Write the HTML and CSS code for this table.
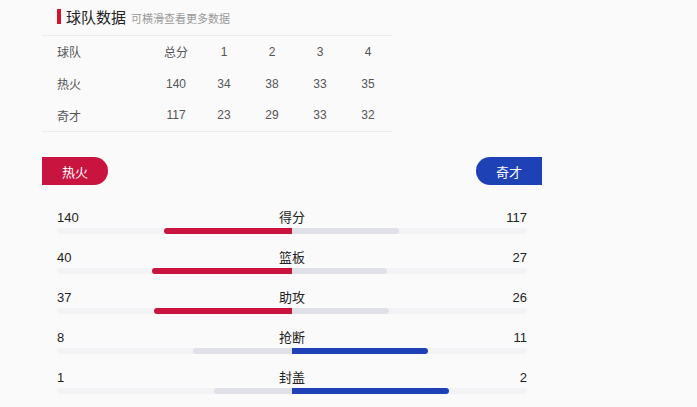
FILE: index.html
```html
<!DOCTYPE html>
<html lang="zh">
<head>
<meta charset="utf-8">
<link rel="stylesheet" href="styles.css">
</head>
<body>
<div class="page">
  <div class="title">
    <span class="mark"></span>
    <span class="title-main">球队数据</span>
    <span class="title-sub">可横滑查看更多数据</span>
  </div>
  <table class="score">
    <tr><td class="team">球队</td><td>总分</td><td>1</td><td>2</td><td>3</td><td>4</td></tr>
    <tr><td class="team">热火</td><td>140</td><td>34</td><td>38</td><td>33</td><td>35</td></tr>
    <tr><td class="team">奇才</td><td>117</td><td>23</td><td>29</td><td>33</td><td>32</td></tr>
  </table>
  <div class="teams">
    <span class="pill home">热火</span>
    <span class="pill away">奇才</span>
  </div>
  <div class="stats">
    <div class="stat">
      <div class="line"><span>140</span><span class="label">得分</span><span>117</span></div>
      <div class="track"><div class="half left"><div class="bar red" style="width:54.47%"></div></div><div class="half right"><div class="bar gray" style="width:45.53%"></div></div></div>
    </div>
    <div class="stat">
      <div class="line"><span>40</span><span class="label">篮板</span><span>27</span></div>
      <div class="track"><div class="half left"><div class="bar red" style="width:59.70%"></div></div><div class="half right"><div class="bar gray" style="width:40.30%"></div></div></div>
    </div>
    <div class="stat">
      <div class="line"><span>37</span><span class="label">助攻</span><span>26</span></div>
      <div class="track"><div class="half left"><div class="bar red" style="width:58.73%"></div></div><div class="half right"><div class="bar gray" style="width:41.27%"></div></div></div>
    </div>
    <div class="stat">
      <div class="line"><span>8</span><span class="label">抢断</span><span>11</span></div>
      <div class="track"><div class="half left"><div class="bar gray" style="width:42.11%"></div></div><div class="half right"><div class="bar blue" style="width:57.89%"></div></div></div>
    </div>
    <div class="stat">
      <div class="line"><span>1</span><span class="label">封盖</span><span>2</span></div>
      <div class="track"><div class="half left"><div class="bar gray" style="width:33.33%"></div></div><div class="half right"><div class="bar blue" style="width:66.67%"></div></div></div>
    </div>
  </div>
</div>
</body>
</html>
```
FILE: styles.css
```css
* { box-sizing: border-box; }
html, body {
  margin: 0;
  padding: 0;
  background: #fafafb;
  font-family: "Liberation Sans", "Noto Sans CJK SC", sans-serif;
  color: #222;
}
.page {
  width: 697px;
  height: 407px;
  overflow: hidden;
  padding-left: 42px;
}
.title {
  display: flex;
  align-items: center;
  height: 35px;
  padding-left: 15px;
  padding-bottom: 2px;
}
.mark {
  width: 4px;
  height: 15px;
  background: #d0152f;
  margin-right: 5px;
}
.title-main {
  font-size: 15px;
  color: #222;
  margin-right: 5px;
}
.title-sub {
  font-size: 11px;
  color: #999;
  padding-top: 2px;
}
.score {
  width: 350px;
  border-collapse: collapse;
  border-top: 1px solid #ebebee;
  border-bottom: 1px solid #ebebee;
  font-size: 12px;
  color: #555;
}
.score td {
  height: 32px;
  width: 48px;
  text-align: center;
  padding: 0;
}
.score td.team {
  width: 110px;
  text-align: left;
  padding-left: 15px;
}
.teams {
  width: 500px;
  display: flex;
  justify-content: space-between;
  margin-top: 25px;
}
.pill {
  width: 66px;
  height: 28px;
  display: flex;
  align-items: center;
  justify-content: center;
  color: #fff;
  font-size: 13px;
}
.home {
  background: #c9143f;
  border-radius: 0 14px 14px 0;
}
.away {
  background: #1e42b6;
  border-radius: 14px 0 0 14px;
}
.stats {
  width: 500px;
  padding: 21px 15px 0;
}
.stat {
  height: 40px;
}
.line {
  display: flex;
  justify-content: space-between;
  height: 22px;
  line-height: 24px;
  font-size: 13px;
  color: #222;
}
.line span { flex: 1; }
.line span:last-child { text-align: right; }
.line .label { text-align: center; flex: 0 0 auto; }
.track {
  display: flex;
  height: 6px;
  background: #f3f3f6;
  border-radius: 3px;
}
.half {
  flex: 1;
  display: flex;
}
.left { justify-content: flex-end; }
.right { justify-content: flex-start; }
.bar { height: 6px; }
.left .bar { border-radius: 3px 0 0 3px; }
.right .bar { border-radius: 0 3px 3px 0; }
.red { background: #c9143f; }
.blue { background: #1e42b6; }
.gray { background: #e0e0e8; }
```
